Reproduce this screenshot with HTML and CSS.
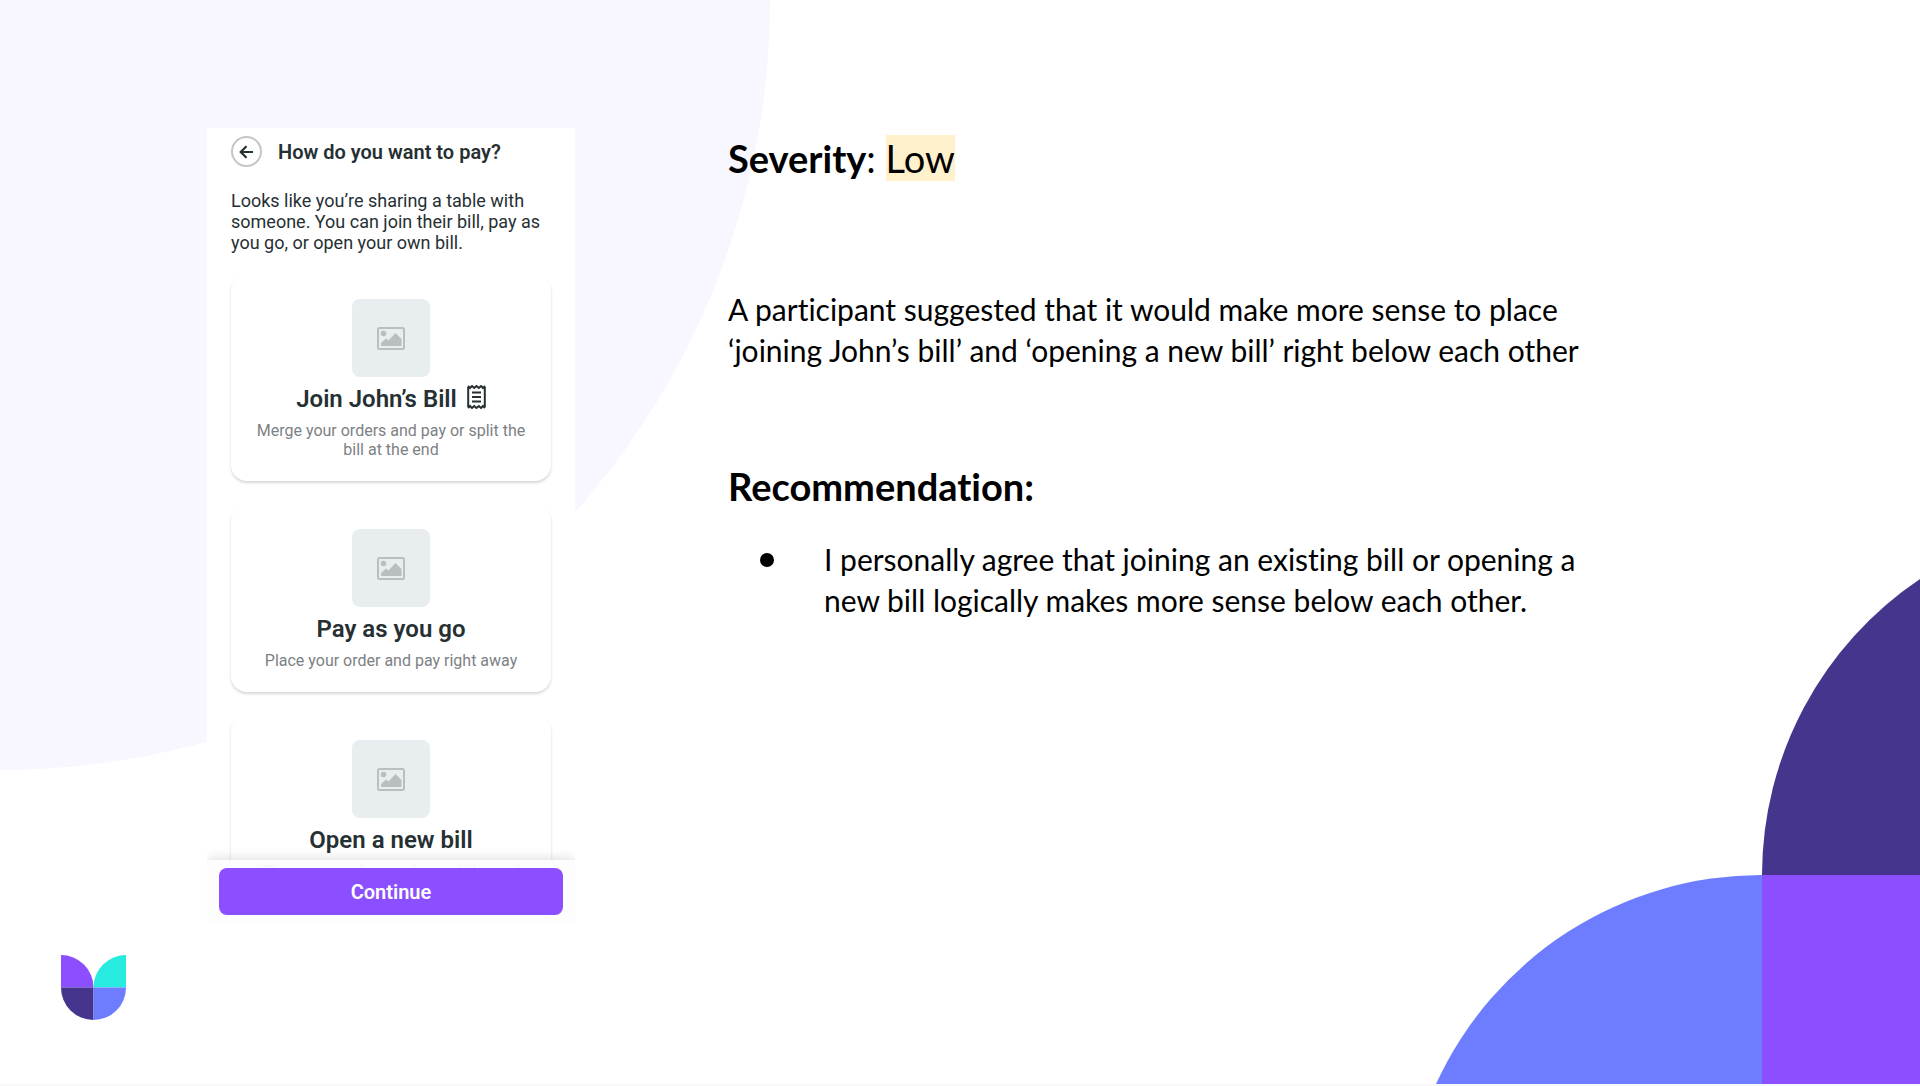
FILE: index.html
```
<!DOCTYPE html>
<html lang="en">
<head>
    <meta charset="UTF-8">
    <meta name="viewport" content="width=device-width, initial-scale=1.0">
    <title>Usability Findings</title>
    <link rel="stylesheet" href="styles.css">
</head>

<body>
    <!-- Shared icons -->
    <svg class="sprite" aria-hidden="true">
        <symbol id="icon-image" viewBox="0 0 28 23">
            <rect x="1" y="1" width="26" height="21" rx="1.5" fill="none" stroke="#b9bec0" stroke-width="2"/>
            <circle cx="6.500" cy="6.500" r="2.800" fill="#b9bec0"/>
            <path d="M4 19v-3l5-4.500 2.500 2 7-7.500 6 6V19z" fill="#b9bec0"/>
        </symbol>
    </svg>

    <div class="slide">
        <div class="bg-circle"></div>
        <svg class="bg-corner" viewBox="0 0 516 566" aria-hidden="true">
            <path d="M358 357A357 357 0 0 1 516 61V357z" fill="#45358c"/>
            <path d="M358 357A358 358 0 0 0 32 566H358z" fill="#6e7dff"/>
            <rect x="358" y="357" width="158" height="209" fill="#8c4fff"/>
        </svg>

        <main class="content">
            <!-- Phone Section -->
            <section class="phone">
                <header class="phone-header">
                    <button type="button" class="back" aria-label="Back">
                        <svg width="15" height="14" viewBox="0 0 15 14">
                            <path d="M14 7H2M7.500 1.200L1.700 7l5.800 5.800" fill="none" stroke="#263033" stroke-width="2.200"/>
                        </svg>
                    </button>
                    <h1 class="phone-title">How do you want to pay?</h1>
                </header>
                <p class="intro">Looks like you’re sharing a table with someone. You can join their bill, pay as you go, or open your own bill.</p>

                <div class="cards">
                    <button type="button" class="card">
                        <span class="thumb"><svg width="28" height="23"><use href="#icon-image"/></svg></span>
                        <span class="card-title">Join John’s Bill
                            <svg class="receipt" width="19" height="24" viewBox="0 0 19 24">
                                <path d="M1.200 2v20M17.800 2v20" stroke="#263033" stroke-width="2"/>
                                <path d="M1 1l2 2 2-2 2.200 2 2.300-2 2.300 2L14 1l2 2 2-2M1 23l2-2 2 2 2.200-2 2.300 2 2.300-2L14 23l2-2 2 2" fill="none" stroke="#263033" stroke-width="2"/>
                                <path d="M5 7.500h9M5 12h9M5 16.500h9" stroke="#263033" stroke-width="2"/>
                            </svg>
                        </span>
                        <span class="card-text">Merge your orders and pay or split the bill at the end</span>
                    </button>
                    <button type="button" class="card">
                        <span class="thumb"><svg width="28" height="23"><use href="#icon-image"/></svg></span>
                        <span class="card-title">Pay as you go</span>
                        <span class="card-text">Place your order and pay right away</span>
                    </button>
                    <button type="button" class="card">
                        <span class="thumb"><svg width="28" height="23"><use href="#icon-image"/></svg></span>
                        <span class="card-title">Open a new bill</span>
                        <span class="card-text">Place your orders and pay at the end</span>
                    </button>
                </div>

                <div class="phone-footer">
                    <button type="button" class="continue">Continue</button>
                </div>
            </section>

            <!-- Notes Section -->
            <section class="notes">
                <h2 class="severity"><b>Severity</b>: <mark>Low</mark></h2>
                <p class="finding">A participant suggested that it would make more sense to place ‘joining John’s bill’ and ‘opening a new bill’ right below each other</p>
                <h2 class="recommendation">Recommendation:</h2>
                <ul class="points">
                    <li>I personally agree that joining an existing bill or opening a new bill logically makes more sense below each other.</li>
                </ul>
            </section>
        </main>

        <footer class="slide-footer">
            <svg width="65" height="65" viewBox="0 0 66 66" role="img" aria-label="Logo">
                <path d="M0 0a33 33 0 0 1 33 33H0z" fill="#8c4fff"/>
                <path d="M66 0a33 33 0 0 0-33 33h33z" fill="#28ebdf"/>
                <path d="M0 33h33v33A33 33 0 0 1 0 33z" fill="#45358c"/>
                <path d="M33 33h33a33 33 0 0 1-33 33z" fill="#6e7dff"/>
            </svg>
        </footer>
    </div>
</body>
</html>
```
FILE: styles.css
```
* {
    box-sizing: border-box;
}

body {
    margin: 0;
    background-color: white;
    color: black;
    font-family: Lato, "Open Sans", sans-serif;
    font-variant-ligatures: none;
}

h1, h2, p, ul {
    margin: 0;
    padding: 0;
}

button {
    font-family: inherit;
    color: inherit;
    cursor: pointer;
}

.sprite {
    display: none;
}

.slide {
    position: relative;
    overflow: hidden;
    min-height: 100vh;
    display: flex;
    flex-direction: column;
    border-bottom: 2px solid #f8f8f8;
}

/* Background shapes */
.bg-circle {
    position: absolute;
    top: 0;
    left: 0;
    width: 770px;
    height: 770px;
    border-bottom-right-radius: 100%;
    background-color: #f8f6ff;
}

.bg-corner {
    position: absolute;
    right: 0;
    bottom: 0;
    width: 516px;
    height: 566px;
}

.content {
    position: relative;
    flex: 1;
    display: flex;
    align-items: flex-start;
    gap: 153px;
    padding: 128px 207px 32px;
}

/* Phone */
.phone {
    position: relative;
    flex: none;
    width: 368px;
    height: 794px;
    padding: 8px 24px 0;
    overflow: hidden;
    background-color: white;
    color: #263033;
    font-family: Roboto, sans-serif;
}

.phone-header {
    display: flex;
    align-items: center;
    gap: 16px;
}

.back {
    display: flex;
    align-items: center;
    justify-content: center;
    width: 31px;
    height: 31px;
    padding: 0;
    border: 2px solid #c4c6c7;
    border-radius: 50%;
    background-color: white;
}

.phone-title {
    font-size: 20px;
    font-weight: 600;
    line-height: 24px;
}

.intro {
    margin: 23px 0 22px;
    font-size: 18px;
    line-height: 21px;
}

.cards {
    display: flex;
    flex-direction: column;
    gap: 24px;
}

.card {
    display: flex;
    flex-direction: column;
    align-items: center;
    gap: 8px;
    padding: 24px 24px 22px;
    border: none;
    border-radius: 16px;
    background-color: white;
    box-shadow: 0 2px 3px rgba(0, 0, 0, 0.16);
}

.thumb {
    display: flex;
    align-items: center;
    justify-content: center;
    width: 78px;
    height: 78px;
    border-radius: 8px;
    background-color: #e8edf0;
}

.card-title {
    font-size: 24px;
    font-weight: 600;
    line-height: 28px;
}

.receipt {
    margin-left: 4px;
    vertical-align: -2px;
}

.card-text {
    color: #7c8184;
    font-size: 16px;
    line-height: 19px;
}

.phone-footer {
    position: absolute;
    left: 0;
    right: 0;
    bottom: 0;
    padding: 8px 12px 7px;
    background-color: rgba(253, 253, 253, 0.93);
    box-shadow: 0 0 12px rgba(0, 0, 0, 0.16);
}

.continue {
    display: block;
    width: 100%;
    height: 47px;
    border: none;
    border-radius: 8px;
    background-color: #8c4fff;
    color: white;
    font-size: 20px;
    font-weight: 600;
}

/* Notes */
.notes {
    flex: 0 1 880px;
    min-width: 0;
    padding-top: 7px;
    font-size: 30px;
    line-height: 41px;
}

.severity,
.recommendation {
    font-size: 38px;
    line-height: 46px;
}

.severity {
    font-weight: 400;
}

.severity mark {
    background-color: #fff1cc;
}

.finding {
    margin: 108px 0 92px;
}

.points {
    margin-top: 30px;
    list-style: none;
}

.points li {
    display: flex;
    gap: 50px;
    padding-left: 32px;
}

.points li::before {
    content: "";
    flex: none;
    width: 14px;
    height: 14px;
    margin-top: 14px;
    border-radius: 50%;
    background-color: black;
}

.slide-footer {
    position: relative;
    padding: 0 61px 64px;
    line-height: 0;
}
```
